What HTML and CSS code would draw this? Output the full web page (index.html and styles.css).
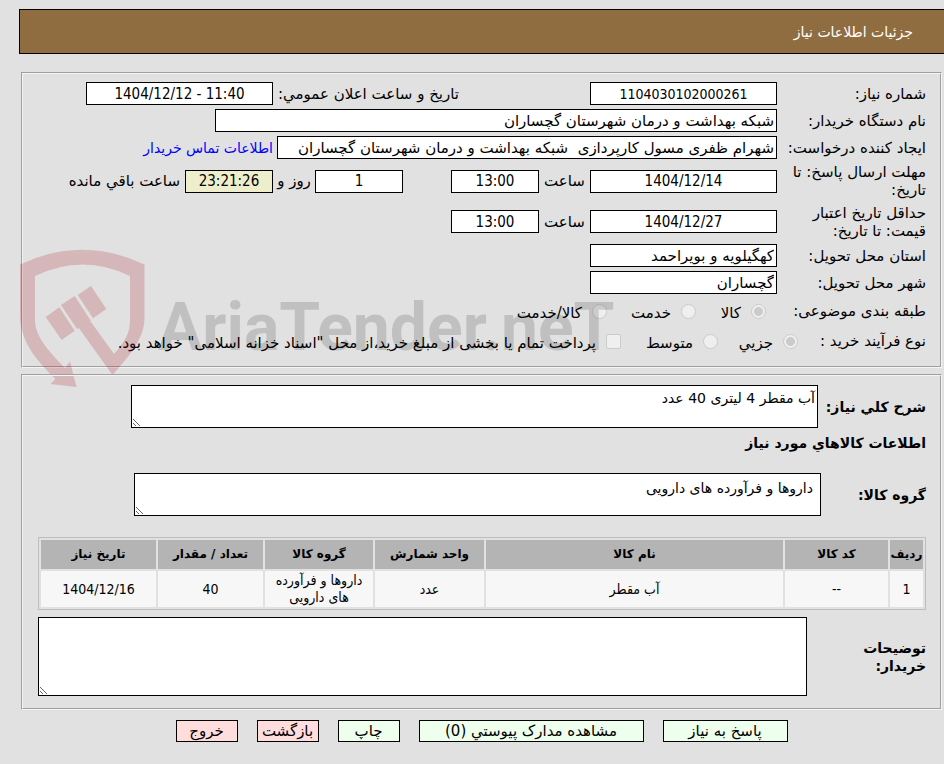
FILE: index.html
```html
<!DOCTYPE html>
<html lang="fa" dir="rtl">
<head>
<meta charset="utf-8">
<title>جزئیات اطلاعات نیاز</title>
<link rel="stylesheet" href="styles.css">
</head>
<body>
<header class="title-bar"><h1>جزئیات اطلاعات نیاز</h1></header>
<main class="content">
  <form>
  <fieldset class="panel details">
    <div class="row">
      <label class="caption" for="need-no">شماره نیاز:</label>
      <input class="field center code w-date" id="need-no" readonly value="1104030102000261">
      <label class="announce" for="announce">تاريخ و ساعت اعلان عمومي:</label>
      <input class="field center w-date" id="announce" dir="ltr" readonly value="1404/12/12 - 11:40">
    </div>
    <div class="row">
      <label class="caption" for="org">نام دستگاه خریدار:</label>
      <input class="field w-org" id="org" readonly value="شبکه بهداشت و درمان شهرستان گچساران">
    </div>
    <div class="row">
      <label class="caption" for="creator">ایجاد کننده درخواست:</label>
      <input class="field w-creator" id="creator" readonly value="شهرام ظفری مسول کارپردازی  شبکه بهداشت و درمان شهرستان گچساران">
      <a class="contact" href="#contact">اطلاعات تماس خریدار</a>
    </div>
    <div class="row">
      <label class="caption" for="deadline">مهلت ارسال پاسخ: تا تاریخ:</label>
      <input class="field center w-date" id="deadline" readonly value="1404/12/14">
      <label class="unit" for="deadline-hour">ساعت</label>
      <input class="field center w-time" id="deadline-hour" readonly value="13:00">
      <input class="field center w-time days" id="days" readonly value="1">
      <label class="unit unit-days" for="days">روز و</label>
      <input class="field center w-time countdown" id="countdown" readonly value="23:21:26">
      <label class="remain" for="countdown">ساعت باقي مانده</label>
    </div>
    <div class="row row-double">
      <label class="caption" for="validity">حداقل تاريخ اعتبار قيمت: تا تاریخ:</label>
      <input class="field center w-date" id="validity" readonly value="1404/12/27">
      <label class="unit" for="validity-hour">ساعت</label>
      <input class="field center w-time" id="validity-hour" readonly value="13:00">
    </div>
    <div class="row">
      <label class="caption" for="province">استان محل تحویل:</label>
      <input class="field w-date" id="province" readonly value="کهگیلویه و بویراحمد">
    </div>
    <div class="row">
      <label class="caption" for="city">شهر محل تحویل:</label>
      <input class="field w-date" id="city" readonly value="گچساران">
    </div>
    <div class="row options">
      <span class="caption">طبقه بندی موضوعی:</span>
      <label class="option goods"><input type="radio" name="subject" checked disabled><span>كالا</span></label>
      <label class="option service"><input type="radio" name="subject" disabled><span>خدمت</span></label>
      <label class="option"><input type="radio" name="subject" disabled><span>كالا/خدمت</span></label>
    </div>
    <div class="row options">
      <span class="caption caption-short">نوع فرآیند خرید :</span>
      <label class="option small"><input type="radio" name="process" checked disabled><span>جزيي</span></label>
      <label class="option medium"><input type="radio" name="process" disabled><span>متوسط</span></label>
      <label class="option"><input type="checkbox" disabled><span>پرداخت تمام یا بخشی از مبلغ خرید،از محل "اسناد خزانه اسلامی" خواهد بود.</span></label>
    </div>
    <svg class="watermark" width="604" height="140" viewBox="18 248 604 140" aria-hidden="true">
      <g class="mark">
        <path d="M20 264.500Q82 235 144.500 264.500V318C144.500 338 130 355 112.500 375L76 324L77.500 329L88 321L91 322L114 354C124 343 130 334 130 320V276Q83 253 35 276V320C35 334 45 348 65 368L70 361.500L76.500 387L50.500 384L55.500 379C38 362 20 342 20 315Z"/>
        <path d="M59.300 307.300L45.700 317L61.700 340L74.700 330.700Z"/>
        <path d="M74.700 296L61 305L77 329L91 321Z"/>
        <path d="M91 286L77.700 295L93 318.300L106.300 309Z"/>
      </g>
      <text class="brand" x="158" y="350">AriaTender.neT</text>
    </svg>
  </fieldset>

  <fieldset class="panel goods-panel">
    <div class="row summary">
      <label class="strong" for="summary">شرح كلي نياز:</label>
      <textarea id="summary" class="area area-short" readonly>آب مقطر 4 لیتری 40 عدد</textarea>
    </div>
    <h2 class="section-title">اطلاعات كالاهاي مورد نياز</h2>
    <div class="row group">
      <label class="strong" for="group">گروه کالا:</label>
      <textarea id="group" class="area area-short padded" readonly>داروها و فرآورده های دارویی</textarea>
    </div>
    <table class="items">
      <colgroup><col class="c-row"><col class="c-code"><col><col class="c-unit"><col class="c-group"><col class="c-qty"><col class="c-date"></colgroup>
      <thead><tr><th>ردیف</th><th>کد کالا</th><th>نام کالا</th><th>واحد شمارش</th><th>گروه کالا</th><th>تعداد / مقدار</th><th>تاریخ نیاز</th></tr></thead>
      <tbody><tr><td>1</td><td>--</td><td>آب مقطر</td><td>عدد</td><td>داروها و فرآورده های دارویی</td><td>40</td><td>1404/12/16</td></tr></tbody>
    </table>
    <div class="row notes">
      <label class="strong" for="notes"><span>توضیحات خریدار:</span></label>
      <textarea id="notes" class="area area-tall" readonly></textarea>
    </div>
  </fieldset>
  <div class="actions">
    <button type="button" class="btn reply">پاسخ به نیاز</button>
    <button type="button" class="btn docs">مشاهده مدارک پيوستي (0)</button>
    <button type="button" class="btn">چاپ</button>
    <button type="button" class="btn danger">بازگشت</button>
    <button type="button" class="btn danger">خروج</button>
  </div>
  </form>
</main>
</body>
</html>
```
FILE: styles.css
```css
* { box-sizing: border-box; }
body {
  margin: 0;
  background: #e1e1e1;
  color: #000;
  font: 15px/18px Tahoma, "DejaVu Sans", sans-serif;
}
input, textarea, button { font: inherit; color: inherit; }
.title-bar {
  margin: 9px 0 0 19px;
  height: 45px;
  display: flex;
  align-items: center;
  padding-inline-start: 31px;
  background: #8f6d40;
  border: 1px solid #000;
  border-right: 0;
  color: #fff;
}
.title-bar h1 { margin: 0; font-size: 14px; font-weight: normal; }
.content { padding: 18px 2px 0 21px; }
.panel {
  position: relative;
  min-width: 0;
  margin: 0 0 6px;
  padding: 8px 14px 12px;
  border: 2px groove #f4f4f4;
}
.details { display: flex; flex-direction: column; gap: 4px; }
.row { display: flex; align-items: center; }
.row-double { min-height: 37px; }
.caption { flex: 0 0 149px; padding-inline-end: 4px; }
.caption-short { flex-basis: 117px; padding-inline-end: 0; }
.field {
  height: 23px;
  min-width: 0;
  padding: 0 2px;
  border: 1px solid #000;
  border-radius: 0;
  background: #fff;
}
.center { text-align: center; font-family: Tahoma, "DejaVu Sans Condensed", "DejaVu Sans", sans-serif; }
.code { font-size: 14px; }
.w-date { width: 187px; }
.w-org { width: 562px; }
.w-creator { width: 500px; }
.w-time { width: 88px; }
.announce { width: 317px; padding-inline-start: 131px; white-space: nowrap; }
.unit { width: 51px; text-align: center; }
.unit-days { width: 42px; }
.days { margin-inline-start: 48px; }
.countdown { background: #eeeecc; }
.remain { padding-inline-start: 5px; }
.contact { padding-inline-start: 4px; color: #00f; font-size: 14px; text-decoration: none; }
.options { min-height: 26px; }
.option { display: flex; align-items: center; gap: 10px; padding-inline-start: 11px; white-space: nowrap; }
.option span { padding-top: 4px; }
.goods { width: 70px; }
.service { width: 89px; }
.small { width: 80px; }
.medium { width: 97px; }
.option input {
  appearance: none;
  flex: none;
  width: 15px;
  height: 15px;
  margin: 0;
  border: 1px solid #cbcbcb;
  border-radius: 2px;
  background: #efefef;
}
.option input[type="radio"] { border-radius: 50%; }
.option input[type="radio"]:checked { background: radial-gradient(circle, #cbcbcb 4px, #efefef 5px); }
.watermark { position: absolute; left: -5px; top: 174px; pointer-events: none; direction: ltr; }
.mark { fill: #aa141e; opacity: .2; }
.brand { fill: #000; opacity: .14; font: bold 66px Roboto, sans-serif; }
.goods-panel { padding: 9px 14px 12px 15px; }
.strong { flex: none; font-weight: bold; font-size: 14px; }
.area {
  display: block;
  margin: 0;
  padding: 3px 2px;
  border: 1px solid #000;
  border-radius: 0;
  background: #fff;
  font-size: 14px;
}
.area-short { height: 43px; flex: 0 1 687px; }
.area-tall { height: 79px; flex: 1; }
.padded { padding: 5px 7px; }
.summary .strong { flex-basis: 108px; }
.group .strong { flex-basis: 105px; }
.notes .strong { flex-basis: 119px; padding-inline-end: 40px; }
.section-title { margin: 6px 0 21px; font-size: 14px; line-height: 18px; }
.items {
  width: 100%;
  margin: 21px 0 7px;
  table-layout: fixed;
  border: 1px solid #bdbdbd;
  border-spacing: 2px;
  line-height: 17px;
  text-align: center;
}
.items th { height: 29px; padding: 0; background: #b4b4b4; font-size: 12px; }
.items td {
  height: 36px;
  padding: 1px 8px;
  background: #f7f7f7;
  font-family: Tahoma, "DejaVu Sans Condensed", "DejaVu Sans", sans-serif;
  font-size: 14px;
}
.items td:first-child { padding: 1px; }
.c-row { width: 33px; }
.c-code { width: 103px; }
.c-unit { width: 109px; }
.c-group { width: 108px; }
.c-qty { width: 105px; }
.c-date { width: 115px; }
.actions { display: flex; justify-content: center; gap: 19px; padding-top: 4px; }
.btn {
  min-width: 62px;
  height: 22px;
  padding: 0;
  border: 1px solid #000;
  border-radius: 0;
  background: #eeffee;
}
.reply { width: 125px; }
.docs { width: 225px; }
.danger { background: #ffdddd; }
```
